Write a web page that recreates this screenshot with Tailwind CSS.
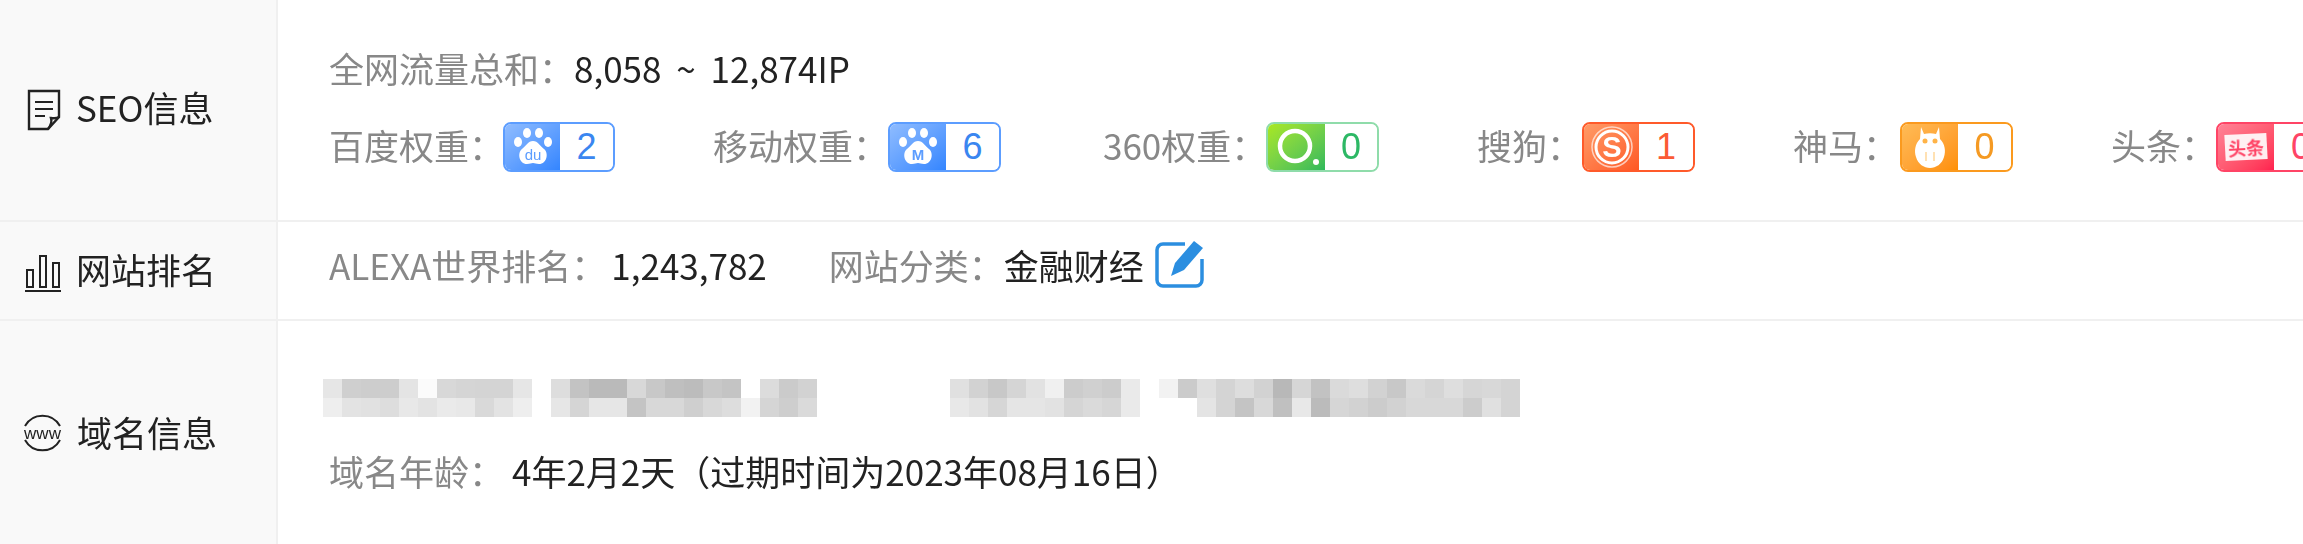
<!DOCTYPE html>
<html lang="zh-CN">
<head>
    <meta charset="UTF-8">
    <title>SEO信息</title>
    <script src="https://cdn.jsdelivr.net/npm/@tailwindcss/browser@4"></script>
</head>
<body class="w-[2303px] h-[544px] overflow-hidden bg-white font-['Noto_Sans_CJK_SC','Noto_Sans',sans-serif] text-[35px] text-[#222]">
<main class="flex flex-col h-[544px]">

    <!-- SEO -->
    <section class="flex h-[222px] border-b-2 border-[#f0f0f0]">
        <div class="w-[278px] shrink-0 flex items-center bg-[#f9f9f9] border-r-2 border-[#f0f0f0] pl-[26px]">
            <svg class="w-[36px] h-[42px] blur-[0.4px]" viewBox="0 0 36 42" fill="none" stroke="#222" stroke-width="2.4">
                <path d="M3 2h30v26L22 40H3z"/>
                <path d="M33 28c-3 2-6 1-8 1 1 3 0 7-3 11"/>
                <path d="M9 13h18M9 20h18M9 27h10" stroke-width="2"/>
            </svg>
            <span class="ml-[14px] pb-[6px] blur-[0.3px]">SEO信息</span>
        </div>
        <div class="flex-1 min-w-0 overflow-hidden pl-[51px] pt-[43px]">
            <div class="flex items-center h-[50px] whitespace-nowrap blur-[0.3px]">
                <span class="text-[#888]">全网流量总和：</span><span class="[word-spacing:7px]">8,058 ~ 12,874IP</span>
            </div>
            <div class="flex items-center h-[50px] mt-[29px] gap-[98px] whitespace-nowrap">
                <div class="flex items-center shrink-0">
                    <span class="text-[#888] pb-[4px] blur-[0.3px] w-[174px]">百度权重：</span>
                    <div class="flex w-[112px] h-[50px] rounded-[8px] overflow-hidden border-2 border-[#5c9dff] blur-[0.4px]">
                        <div class="w-[55px] bg-gradient-to-br from-[#8fbcff] to-[#3385ff] flex items-center justify-center">
                            <svg class="w-[44px] h-[42px]" viewBox="0 0 44 42" fill="#fff">
                                <ellipse cx="16" cy="7" rx="4" ry="5"/><ellipse cx="28" cy="7" rx="4" ry="5"/>
                                <ellipse cx="7" cy="16" rx="4" ry="5"/><ellipse cx="37" cy="16" rx="4" ry="5"/>
                                <path d="M22 15c5 0 7 5 11 8 5 4 3 15-5 15-3 0-4-1-6-1s-3 1-6 1c-8 0-10-11-5-15 4-3 6-8 11-8z"/>
                                <text x="22" y="34" text-anchor="middle" font-size="15" fill="#5c9dff" font-family="Liberation Sans">du</text>
                            </svg>
                        </div>
                        <div class="flex-1 bg-white flex items-center justify-center font-['Liberation_Sans'] text-[36px] text-[#3a86f0]">2</div>
                    </div>
                </div>
                <div class="flex items-center shrink-0 mr-[4px]">
                    <span class="text-[#888] pb-[4px] blur-[0.3px] w-[175px]">移动权重：</span>
                    <div class="flex w-[113px] h-[50px] rounded-[8px] overflow-hidden border-2 border-[#5c9dff] blur-[0.4px]">
                        <div class="w-[56px] bg-gradient-to-br from-[#8fbcff] to-[#3385ff] flex items-center justify-center">
                            <svg class="w-[44px] h-[42px]" viewBox="0 0 44 42" fill="#fff">
                                <ellipse cx="16" cy="7" rx="4" ry="5"/><ellipse cx="28" cy="7" rx="4" ry="5"/>
                                <ellipse cx="7" cy="16" rx="4" ry="5"/><ellipse cx="37" cy="16" rx="4" ry="5"/>
                                <path d="M22 15c5 0 7 5 11 8 5 4 3 15-5 15-3 0-4-1-6-1s-3 1-6 1c-8 0-10-11-5-15 4-3 6-8 11-8z"/>
                                <text x="22" y="34" text-anchor="middle" font-size="15" font-weight="700" fill="#5c9dff" font-family="Liberation Sans">M</text>
                            </svg>
                        </div>
                        <div class="flex-1 bg-white flex items-center justify-center font-['Liberation_Sans'] text-[36px] text-[#3a86f0]">6</div>
                    </div>
                </div>
                <div class="flex items-center shrink-0">
                    <span class="text-[#888] pb-[4px] blur-[0.3px] w-[163px] whitespace-nowrap">360权重：</span>
                    <div class="flex w-[113px] h-[50px] rounded-[8px] overflow-hidden border-2 border-[#8fdcaa] blur-[0.4px]">
                        <div class="w-[57px] bg-gradient-to-br from-[#a8e81c] to-[#2cb95a] flex items-center justify-center">
                            <svg class="w-[50px] h-[42px]" viewBox="0 0 50 42" fill="none">
                                <circle cx="23" cy="20" r="15" stroke="#fff" stroke-width="4.5"/>
                                <circle cx="44" cy="36" r="3" fill="#fff"/>
                            </svg>
                        </div>
                        <div class="flex-1 bg-white flex items-center justify-center font-['Liberation_Sans'] text-[36px] text-[#2db865]">0</div>
                    </div>
                </div>
                <div class="flex items-center shrink-0">
                    <span class="text-[#888] pb-[4px] blur-[0.3px] w-[105px]">搜狗：</span>
                    <div class="flex w-[113px] h-[50px] rounded-[8px] overflow-hidden border-2 border-[#ff5a2a] blur-[0.4px]">
                        <div class="w-[55px] bg-gradient-to-br from-[#ff9a66] to-[#ff5722] flex items-center justify-center">
                            <svg class="w-[44px] h-[44px]" viewBox="0 0 44 44" fill="none">
                                <circle cx="22" cy="22" r="20" stroke="#fff" stroke-opacity=".65" stroke-width="1.5"/>
                                <circle cx="22" cy="22" r="16" stroke="#fff" stroke-width="3"/>
                                <text x="22" y="32" text-anchor="middle" font-size="29" font-weight="700" fill="#fff" font-family="Liberation Sans">S</text>
                            </svg>
                        </div>
                        <div class="flex-1 bg-white flex items-center justify-center font-['Liberation_Sans'] text-[36px] text-[#fb5a35]">1</div>
                    </div>
                </div>
                <div class="flex items-center shrink-0">
                    <span class="text-[#888] pb-[4px] blur-[0.3px] w-[107px]">神马：</span>
                    <div class="flex w-[113px] h-[50px] rounded-[8px] overflow-hidden border-2 border-[#fb9a1e] blur-[0.4px]">
                        <div class="w-[56px] bg-gradient-to-br from-[#ffbb55] to-[#ff9000] flex items-center justify-center">
                            <svg class="w-[36px] h-[46px]" viewBox="0 0 36 46" fill="#fff">
                                <path d="M9 3l3 7c4-1 8-1 12 0l3-7 1 12c5 5 6 12 4 18-2 7-8 11-14 11S6 40 4 33c-2-6-1-13 4-18z"/>
                                <circle cx="13" cy="17" r="2.5" fill="#ffb347"/><circle cx="23" cy="17" r="2.5" fill="#ffb347"/>
                                <path d="M14 28v9M22 28v9" stroke="#ffd79a" stroke-width="1.5"/>
                            </svg>
                        </div>
                        <div class="flex-1 bg-white flex items-center justify-center font-['Liberation_Sans'] text-[36px] text-[#f59a23]">0</div>
                    </div>
                </div>
                <div class="flex items-center shrink-0">
                    <span class="text-[#888] pb-[4px] blur-[0.3px] w-[105px]">头条：</span>
                    <div class="flex w-[114px] h-[50px] rounded-[8px] overflow-hidden border-2 border-[#ff4466] blur-[0.4px]">
                        <div class="w-[56px] bg-gradient-to-br from-[#ff8296] to-[#ff1f4f] flex items-center justify-center">
                            <div class="w-[42px] h-[26px] bg-white/90 -rotate-3 flex items-center justify-center text-[18px] leading-none font-bold text-[#ff4466]">头条</div>
                        </div>
                        <div class="flex-1 bg-white flex items-center justify-center font-['Liberation_Sans'] text-[36px] text-[#ff4466]">0</div>
                    </div>
                </div>
            </div>
        </div>
    </section>

    <!-- 排名 -->
    <section class="flex h-[99px] border-b-2 border-[#f0f0f0]">
        <div class="w-[278px] shrink-0 flex items-center bg-[#f9f9f9] border-r-2 border-[#f0f0f0] pl-[25px] pt-[4px]">
            <svg class="w-[36px] h-[38px] blur-[0.4px]" viewBox="0 0 36 38" fill="none" stroke="#222" stroke-width="2">
                <path d="M2 16h6v17H2zM15 2h6v31h-6zM28 9h6v24h-6z"/>
                <path d="M0 37h36"/>
            </svg>
            <span class="ml-[15px] pb-[6px] blur-[0.3px]">网站排名</span>
        </div>
        <div class="flex-1 flex items-center pl-[51px] pb-[11px] whitespace-nowrap">
            <div class="flex items-center blur-[0.3px]">
                <span class="text-[#888] mr-[5px]">ALEXA世界排名：</span><span>1,243,782</span>
                <span class="text-[#888] ml-[62px]">网站分类：</span><span>金融财经</span>
            </div>
            <svg class="w-[51px] h-[50px] ml-[10px] -mt-[3px] blur-[0.4px]" viewBox="0 0 51 50" fill="none">
                <path d="M31 5H9a6 6 0 0 0-6 6v30a6 6 0 0 0 6 6h33a6 6 0 0 0 6-6V20" stroke="#2b8ee0" stroke-width="3.5"/>
                <path d="M40 2l9 7-19 22-13 6 4-13z" fill="#2b8ee0"/>
            </svg>
        </div>
    </section>

    <!-- 域名 -->
    <section class="flex flex-1">
        <div class="w-[278px] shrink-0 flex items-center bg-[#f9f9f9] border-r-2 border-[#f0f0f0] pl-[22px]">
            <svg class="w-[41px] h-[40px] blur-[0.3px]" viewBox="0 0 41 40" fill="none" stroke="#222" stroke-width="2">
                <path d="M3 13a20 20 0 0 1 35 0"/>
                <path d="M3 27a20 20 0 0 0 35 0"/>
                <text x="20.5" y="26" text-anchor="middle" font-size="17" fill="#222" stroke="none" font-family="Liberation Sans">www</text>
            </svg>
            <span class="ml-[14px] blur-[0.3px]">域名信息</span>
        </div>
        <div class="flex-1 pt-[58px] pl-[45px]">
            <div id="mosaic" class="flex h-[38px]"></div>
            <div class="flex items-center h-[50px] mt-[29px] pl-[6px] whitespace-nowrap blur-[0.3px]">
                <span class="text-[#888] w-[183px]">域名年龄：</span><span>4年2月2天（过期时间为2023年08月16日）</span>
            </div>
        </div>
    </section>
</main>

<script>
    // blurred-out whois line, grey value of each 19px block
    const segments = [
        {gap: 0, top: ['e6','cf','cd','cd','e4','fb','d8','d5','d4','d4','e6'], bottom: ['ee','e3','e1','dd','e8','e3','ea','e8','d9','e3','ee']},
        {gap: 19, top: ['dd','c3','ba','ba','d8','c8','bf','bc','c8','c4','ff','dc','cb','d2'], bottom: ['e6','d5','e6','e6','c4','d8','d8','cf','d8','dd','f2','d5','ce','da']},
        {gap: 133, top: ['e0','d2','c8','d5','e2','f0','cc','d0','cc','ea'], bottom: ['e8','e2','d6','e5','e5','e2','d5','da','d6','ea']},
        {gap: 19, top: ['f2','cb','df','d4','dd','d2','b8','d6','c2','da','de','d2','c8','da','d5','de','d6','d8','d4'], bottom: ['ff','ff','e4','d4','c4','d8','c0','e8','bb','d6','d2','cc','d2','d8','d8','d8','cc','e0','d4']},
    ];
    const mosaic = document.getElementById('mosaic');
    segments.forEach(seg => {
        const grid = document.createElement('div');
        grid.style.marginLeft = seg.gap + 'px';
        grid.style.display = 'grid';
        grid.style.gridTemplateColumns = `repeat(${seg.top.length}, 19px)`;
        grid.style.gridAutoRows = '19px';
        [...seg.top, ...seg.bottom].forEach(v => {
            const cell = document.createElement('div');
            cell.style.backgroundColor = `#${v}${v}${v}`;
            grid.appendChild(cell);
        });
        mosaic.appendChild(grid);
    });
</script>
</body>
</html>
